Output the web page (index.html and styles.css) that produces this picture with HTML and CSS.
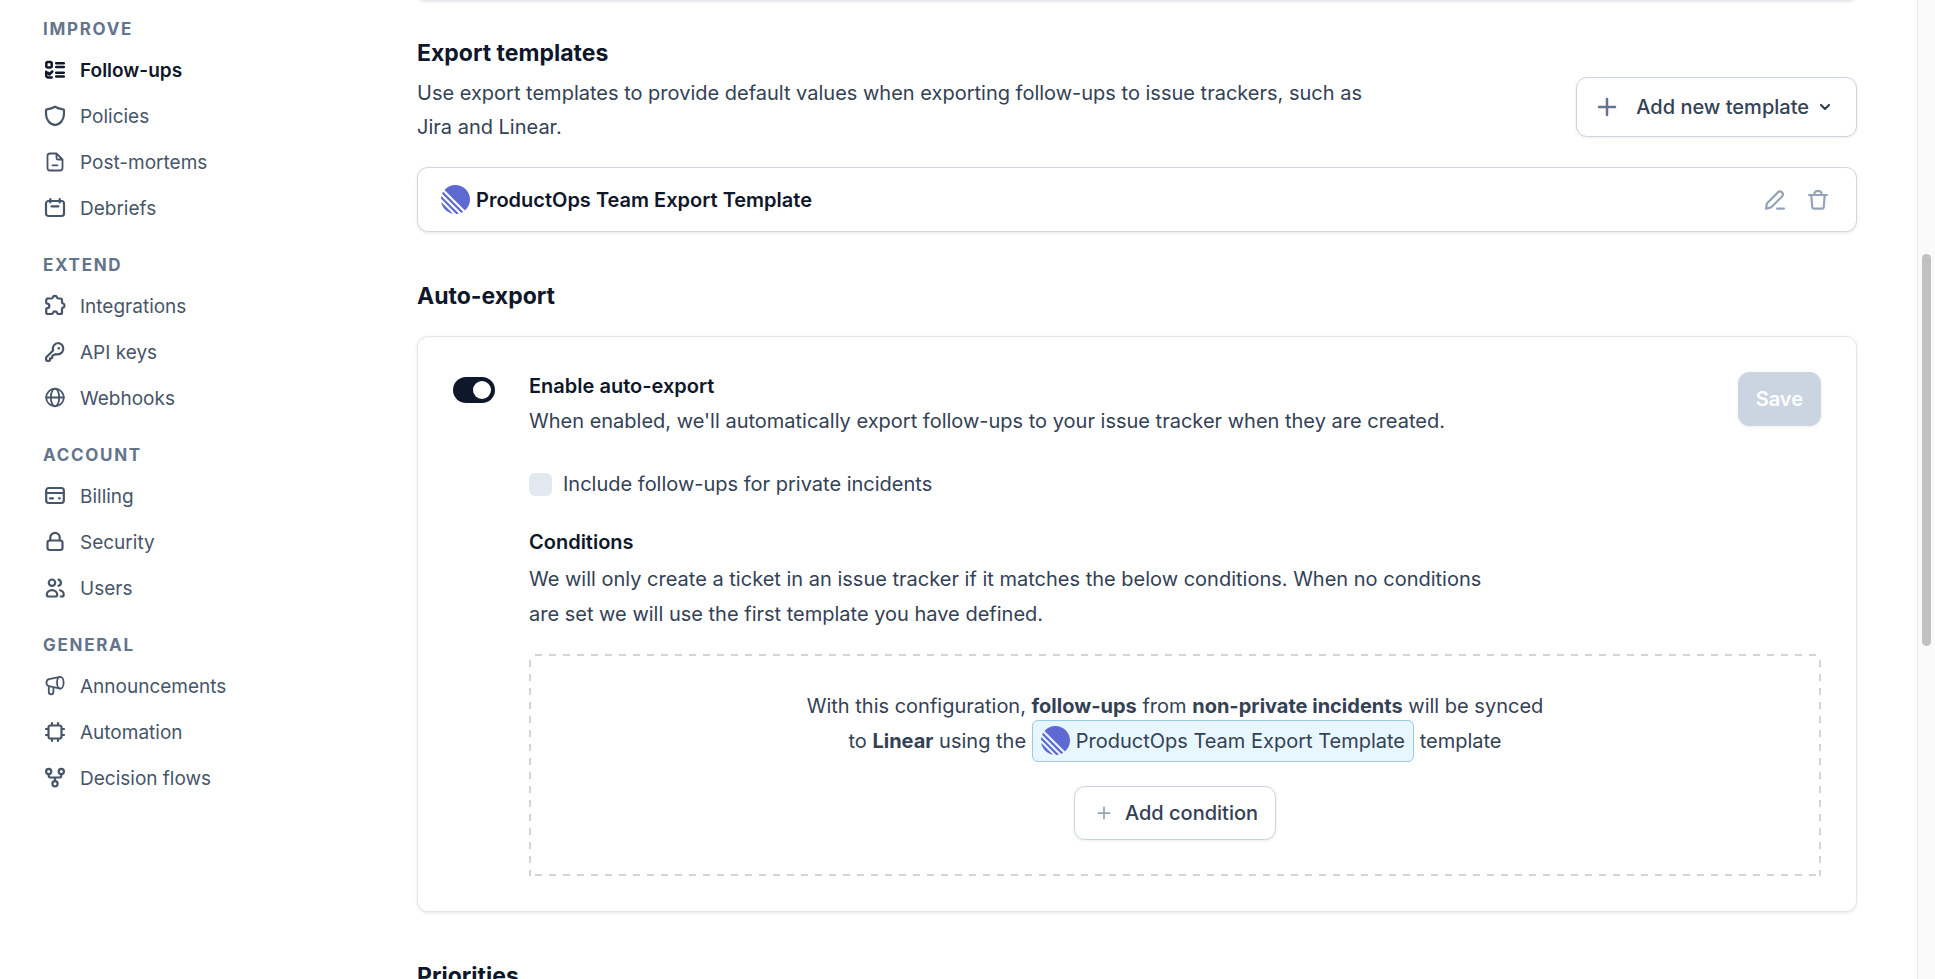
FILE: index.html
```html
<!DOCTYPE html>
<html lang="en">
<head>
  <meta charset="UTF-8">
  <meta name="viewport" content="width=device-width, initial-scale=1.0">
  <title>Follow-ups settings</title>
  <link rel="stylesheet" href="styles.css">
</head>
<body>
  <!-- shared logo, used in the template row and the sync summary -->
  <svg class="sprite" aria-hidden="true">
    <symbol id="linear" viewBox="0 0 100 100">
      <path fill="#5e6ad2" d="M1.2 61.5c-.2-.9.9-1.5 1.6-.9l36.6 36.6c.6.7 0 1.8-.9 1.6C20.1 94.4 5.6 79.9 1.2 61.5ZM0 46.9c0 .3.1.5.3.8l52 52c.2.2.5.3.8.3 2.4-.2 4.7-.5 6.9-.9.8-.2 1-1.1.5-1.7L2.6 39.4c-.6-.6-1.5-.3-1.7.5-.4 2.3-.8 4.6-.9 7ZM4.2 29.7c-.2.4-.1.8.2 1.1l64.8 64.8c.3.3.7.4 1.1.2 1.8-.8 3.5-1.7 5.2-2.7.6-.3.7-1.1.2-1.6L8.4 24.3c-.5-.5-1.3-.4-1.6.2-1 1.6-1.9 3.4-2.6 5.2ZM12.7 18.1c-.4-.4-.4-1 0-1.4C21.8 6.5 35.1 0 50 0c27.6 0 50 22.4 50 50 0 14.9-6.5 28.2-16.7 37.3-.4.4-1 .4-1.4 0L12.7 18.1Z"/>
    </symbol>
  </svg>

  <div class="app">
    <nav class="sidebar">
      <h3 class="nav-label">Improve</h3>
      <a class="nav-item active" href="#">
        <svg class="icon heavy" viewBox="0 0 24 24"><rect x="3.3" y="4" width="5.4" height="5.4" rx="1.5"/><path d="M13.2 5.3h7.6M13.2 9h7.6M13.2 14.7h7.6M13.2 18.4h7.6M3.2 13.8v3.7a2 2 0 0 0 2 2h3.5M5 14.8l1.3 1.7 3-3"/></svg>
        Follow-ups
      </a>
      <a class="nav-item" href="#">
        <svg class="icon" viewBox="0 0 24 24"><path d="M12 2.8C9.5 4.2 6.5 5 4 5.3a1 1 0 0 0-1 1V10c0 5.5 4 10.8 9 10.8s9-5.3 9-10.8V6.3a1 1 0 0 0-1-1c-2.5-.3-5.5-1.1-8-2.5Z"/></svg>
        Policies
      </a>
      <a class="nav-item" href="#">
        <svg class="icon thin" viewBox="0 0 24 24"><path d="M13.5 3.5H7A2.5 2.5 0 0 0 4.5 6v12A2.5 2.5 0 0 0 7 20.5h10a2.5 2.5 0 0 0 2.5-2.5V9.5Zm0 0V8A1.5 1.5 0 0 0 15 9.5h4.5M9.5 15.3h5"/></svg>
        Post-mortems
      </a>
      <a class="nav-item" href="#">
        <svg class="icon" viewBox="0 0 24 24"><rect x="3" y="5" width="18" height="15" rx="2.5"/><path d="M7.3 3v3.5M16.7 3v3.5M8.5 10.3h7"/></svg>
        Debriefs
      </a>

      <h3 class="nav-label">Extend</h3>
      <a class="nav-item" href="#">
        <svg class="icon" viewBox="0 0 24 24"><path d="M5.5 4.5h3.2c.5 0 .9-.4 1-.9a2.3 2.3 0 0 1 4.4 0c.1.5.5.9 1 .9h2.4a1.5 1.5 0 0 1 1.5 1.5v2.3c0 .5.4.9.9 1a2.3 2.3 0 0 1 0 4.4c-.5.1-.9.5-.9 1v3.8a1.5 1.5 0 0 1-1.5 1.5h-2.4c-.5 0-.8-.4-.9-.9a2.3 2.3 0 0 0-4.4 0c-.1.5-.4.9-.9.9H5a1.8 1.8 0 0 1-1.8-1.8V15c0-.5.4-.8.9-.9a2.2 2.2 0 0 0 0-4.4c-.5-.1-.9-.4-.9-.9V6.3a1.8 1.8 0 0 1 2.3-1.8Z"/></svg>
        Integrations
      </a>
      <a class="nav-item" href="#">
        <svg class="icon" viewBox="0 0 24 24"><path d="M15.5 3a5.7 5.7 0 0 0-5.4 7.5L3.5 17a1.5 1.5 0 0 0-.4 1v1.8c0 .6.4 1 1 1h2c.6 0 1-.4 1-1v-1.5h1.2c.6 0 1-.4 1-1v-1.5l3.7-1.7A5.7 5.7 0 1 0 15.5 3Z"/><circle class="dot" cx="15.8" cy="8.2" r="1.3"/></svg>
        API keys
      </a>
      <a class="nav-item" href="#">
        <svg class="icon thin" viewBox="0 0 24 24"><circle cx="12" cy="11.5" r="8.8"/><ellipse cx="12" cy="11.5" rx="4.2" ry="8.8"/><path d="M3.2 11.5h17.6"/></svg>
        Webhooks
      </a>

      <h3 class="nav-label">Account</h3>
      <a class="nav-item" href="#">
        <svg class="icon" viewBox="0 0 24 24"><rect x="3.2" y="4" width="17.6" height="15" rx="2.5"/><path d="M3.2 9h17.6M7 14.3h3M16 14.3h.8"/></svg>
        Billing
      </a>
      <a class="nav-item" href="#">
        <svg class="icon" viewBox="0 0 24 24"><rect x="4.5" y="10.5" width="15" height="9.5" rx="2.2"/><path d="M7.3 10.5V7.5a4.7 4.7 0 0 1 9.4 0v3"/></svg>
        Security
      </a>
      <a class="nav-item" href="#">
        <svg class="icon" viewBox="0 0 24 24"><circle cx="9" cy="6.7" r="3.2"/><path d="M9 14.2c-3 0-5.2 2.2-5.2 4.6 0 1 .8 1.7 1.8 1.7h6.8c1 0 1.8-.7 1.8-1.7 0-2.4-2.2-4.6-5.2-4.6ZM15.5 3.6a3.2 3.2 0 0 1 0 6.2M17 14.3c2.2.5 3.7 2.4 3.7 4.4 0 1-.8 1.8-1.8 1.8h-1.2"/></svg>
        Users
      </a>

      <h3 class="nav-label">General</h3>
      <a class="nav-item" href="#">
        <svg class="icon thin" viewBox="0 0 24 24"><ellipse cx="17.3" cy="8.7" rx="3.3" ry="5.9"/><path d="M17.3 2.8 6 5.2c-3.4.9-3.4 6.2 0 7l11.3 2.4M5.8 12.2V18a2.3 2.3 0 0 0 2.3 2.3 2.3 2.3 0 0 0 2.3-2.3v-4.8"/></svg>
        Announcements
      </a>
      <a class="nav-item" href="#">
        <svg class="icon" viewBox="0 0 24 24"><rect x="5.5" y="5.5" width="13" height="13" rx="2"/><path d="M9 5V3M15 5V3M9 21v-2M15 21v-2M5 9H3M5 15H3M21 9h-2M21 15h-2"/></svg>
        Automation
      </a>
      <a class="nav-item" href="#">
        <svg class="icon" viewBox="0 0 24 24"><circle cx="5.7" cy="5.5" r="2.6"/><circle cx="18.3" cy="5.5" r="2.6"/><circle cx="12" cy="17.8" r="2.6"/><path d="M5.7 8.5v1a2 2 0 0 0 2 2h8.6a2 2 0 0 0 2-2v-1M12 11.5V15"/></svg>
        Decision flows
      </a>
    </nav>

    <main class="content">
      <div class="card card-previous"></div>

      <section class="section">
        <h2 class="section-title">Export templates</h2>
        <div class="section-intro">
          <p class="text">Use export templates to provide default values when exporting follow-ups to issue trackers, such as Jira and Linear.</p>
          <button class="button button-large" type="button">
            <svg class="plus" viewBox="0 0 20 20"><path d="M10 2v16M2 10h16"/></svg>
            <span>Add new template</span>
            <svg class="chevron" viewBox="0 0 12 12"><path d="M2 4l4 4 4-4"/></svg>
          </button>
        </div>
        <div class="card template">
          <svg class="logo"><use href="#linear"/></svg>
          <span class="template-name">ProductOps Team Export Template</span>
          <button class="icon-button" type="button" aria-label="Edit template">
            <svg class="icon" viewBox="0 0 24 24"><path d="M3 20.8l.8-4.6a3 3 0 0 1 .8-1.5L15.2 4.1a2.3 2.3 0 0 1 3.3 0l.8.8a2.3 2.3 0 0 1 0 3.3L8.8 18.8a3 3 0 0 1-1.5.8ZM14 20.6h7"/></svg>
          </button>
          <button class="icon-button" type="button" aria-label="Delete template">
            <svg class="icon" viewBox="0 0 24 24"><path d="M3 7h18M5.3 7l.9 11.8a2 2 0 0 0 2 1.9h7.6a2 2 0 0 0 2-1.9L18.7 7M8.3 6.5a3.7 3.7 0 0 1 7.4 0"/></svg>
          </button>
        </div>
      </section>

      <section class="section">
        <h2 class="section-title">Auto-export</h2>
        <div class="card auto-export">
          <input class="toggle" type="checkbox" role="switch" id="auto-export" checked>
          <div class="auto-export-body">
            <div class="auto-export-head">
              <div>
                <label class="label" for="auto-export">Enable auto-export</label>
                <p class="text">When enabled, we'll automatically export follow-ups to your issue tracker when they are created.</p>
              </div>
              <button class="button button-save" type="submit" disabled>Save</button>
            </div>

            <label class="check text">
              <input class="checkbox" type="checkbox">
              Include follow-ups for private incidents
            </label>

            <h3 class="label">Conditions</h3>
            <p class="text conditions-text">We will only create a ticket in an issue tracker if it matches the below conditions. When no conditions are set we will use the first template you have defined.</p>

            <div class="conditions">
              <p class="text summary">
                With this configuration, <strong>follow-ups</strong> from <strong>non-private incidents</strong> will be synced to <strong>Linear</strong> using the <span class="chip"><svg class="logo"><use href="#linear"/></svg>ProductOps Team Export Template</span> template
              </p>
              <button class="button" type="button">
                <svg class="plus plus-small" viewBox="0 0 20 20"><path d="M10 2v16M2 10h16"/></svg>
                <span>Add condition</span>
              </button>
            </div>
          </div>
        </div>
      </section>

      <section class="section">
        <h2 class="section-title">Priorities</h2>
      </section>
    </main>

    <div class="scrollbar"><div class="scrollbar-thumb"></div></div>
  </div>
</body>
</html>
```
FILE: styles.css
```css
* {
  margin: 0;
  padding: 0;
  box-sizing: border-box;
}

body {
  font-family: Inter, "Liberation Sans", sans-serif;
  font-size: 20px;
  color: #334155;
  background: #ffffff;
}

button {
  font: inherit;
  cursor: pointer;
}

.sprite {
  display: none;
}

.app {
  display: flex;
  height: 100vh;
  overflow: hidden;
}

/* sidebar */

.sidebar {
  flex: 0 0 417px;
  padding: 17px 43px;
}

.nav-label {
  font-size: 17px;
  line-height: 24px;
  font-weight: 700;
  letter-spacing: 0.1em;
  text-transform: uppercase;
  color: #64748b;
  margin: 22px 0 6px;
}

.nav-label:first-child {
  margin-top: 0;
}

.nav-item {
  display: flex;
  align-items: center;
  gap: 13px;
  height: 46px;
  font-size: 19px;
  color: #475569;
  text-decoration: none;
}

.nav-item.active {
  font-weight: 600;
  color: #0f172a;
}

.icon {
  flex: none;
  width: 24px;
  height: 24px;
  fill: none;
  stroke: currentColor;
  stroke-width: 2.2;
  stroke-linecap: round;
  stroke-linejoin: round;
}

.icon.thin {
  stroke-width: 1.8;
}

.icon.heavy {
  stroke-width: 2.5;
}

.icon .dot {
  fill: currentColor;
  stroke: none;
}

/* main column */

.content {
  flex: 1;
  min-width: 0;
  padding-right: 60px;
}

.card {
  border: 1px solid #e2e8f0;
  border-radius: 11px;
  background: #ffffff;
  box-shadow: 0 1px 3px rgba(15, 23, 42, 0.1);
}

.card-previous {
  height: 16px;
  margin-top: -15px;
}

.section {
  margin-top: 47px;
}

.card-previous + .section {
  margin-top: 35px;
}

.section-title {
  font-size: 23px;
  line-height: 34px;
  font-weight: 700;
  color: #0f172a;
  margin-bottom: 23px;
}

.text {
  line-height: 35px;
}

.label {
  display: block;
  font-size: 20px;
  line-height: 28px;
  font-weight: 600;
  color: #0f172a;
  margin-bottom: 4px;
}

.section-intro {
  display: flex;
  align-items: flex-start;
  justify-content: space-between;
  margin: -17px 0 23px;
}

.section-intro .text {
  max-width: 980px;
  line-height: 34px;
}

.button {
  display: inline-flex;
  align-items: center;
  height: 54px;
  padding: 0 17px;
  border: 1px solid #cbd5e1;
  border-radius: 11px;
  background: #ffffff;
  box-shadow: 0 1px 3px rgba(15, 23, 42, 0.08);
  font-weight: 500;
  color: #334155;
}

.button-large {
  height: 60px;
  margin-top: 1px;
}

.button-save {
  background: #cbd5e1;
  color: #ffffff;
  font-weight: 600;
}

.plus {
  width: 20px;
  height: 20px;
  margin: 0 19px 0 3px;
  fill: none;
  stroke: #64748b;
  stroke-width: 2.5;
  stroke-linecap: round;
}

.plus-small {
  width: 14px;
  height: 14px;
  margin: 0 14px 0 5px;
  stroke: #94a3b8;
}

.chevron {
  width: 12px;
  height: 12px;
  margin: 0 8px 0 10px;
  fill: none;
  stroke: #334155;
  stroke-width: 2.2;
  stroke-linecap: round;
  stroke-linejoin: round;
}

.logo {
  flex: none;
  width: 29px;
  height: 29px;
}

/* template row */

.template {
  display: flex;
  align-items: center;
  height: 65px;
  padding: 0 26px 0 23px;
  border-color: #d4d6e0;
}

.template-name {
  flex: 1;
  margin-left: 6px;
  font-weight: 600;
  color: #0f172a;
}

.icon-button {
  display: flex;
  margin-left: 19px;
  border: none;
  background: none;
  color: #94a3b8;
}

/* auto-export card */

.auto-export {
  display: flex;
  align-items: flex-start;
  gap: 34px;
  padding: 35px;
}

.toggle {
  appearance: none;
  display: flex;
  justify-content: flex-end;
  flex: none;
  width: 42px;
  height: 26px;
  margin-top: 5px;
  padding: 4px;
  border-radius: 13px;
  background: #0f172a;
}

.toggle::before {
  content: "";
  width: 18px;
  height: 18px;
  border-radius: 50%;
  background: #ffffff;
}

.toggle:not(:checked) {
  justify-content: flex-start;
  background: #cbd5e1;
}

.auto-export-body {
  flex: 1;
}

.auto-export-head {
  display: flex;
  align-items: flex-start;
  justify-content: space-between;
}

.check {
  display: flex;
  align-items: center;
  gap: 11px;
  margin: 28px 0 26px;
}

.checkbox {
  appearance: none;
  width: 23px;
  height: 23px;
  border-radius: 6px;
  background: #e2e8f0;
}

.conditions-text {
  max-width: 980px;
  margin-top: 6px;
}

/* dashed frame, with longer dashes than border-style gives */
.conditions {
  display: flex;
  flex-direction: column;
  align-items: center;
  gap: 27px;
  margin-top: 22px;
  padding: 35px 35px 36px;
  background-image:
    repeating-linear-gradient(90deg, transparent 0 6px, #d1d5db 6px 13px, transparent 13px 14px),
    repeating-linear-gradient(90deg, transparent 0 6px, #d1d5db 6px 13px, transparent 13px 14px),
    repeating-linear-gradient(180deg, transparent 0 6px, #d1d5db 6px 13px, transparent 13px 14px),
    repeating-linear-gradient(180deg, transparent 0 6px, #d1d5db 6px 13px, transparent 13px 14px);
  background-position: top, bottom, left, right;
  background-size: 100% 2px, 100% 2px, 2px 100%, 2px 100%;
  background-repeat: no-repeat;
}

.summary {
  max-width: 750px;
  text-align: center;
}

.chip {
  padding: 8px;
  border: 1px solid #9ccbe5;
  border-radius: 6px;
  background: #e8f6ff;
}

.chip .logo {
  margin-right: 6px;
  vertical-align: -7px;
}

/* scrollbar */

.scrollbar {
  flex: none;
  width: 18px;
  border-left: 1px solid #e8e8e8;
  background: #fafafa;
  padding-top: 254px;
}

.scrollbar-thumb {
  width: 9px;
  height: 40vh;
  margin-left: 4px;
  border-radius: 5px;
  background: #c1c1c1;
}
```
